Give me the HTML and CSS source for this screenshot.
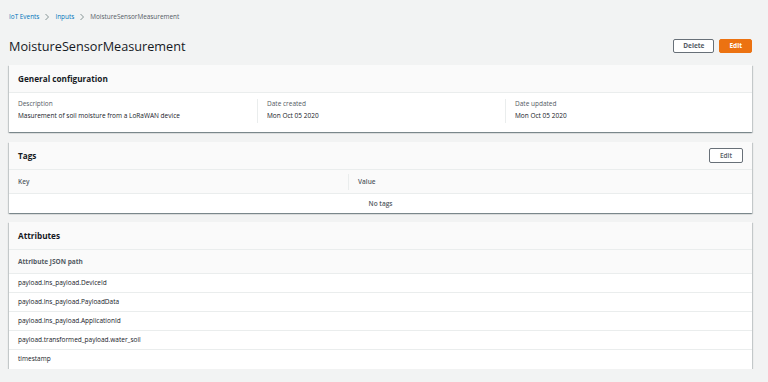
FILE: index.html
```html
<!DOCTYPE html>
<html>
<head>
<meta charset="utf-8">
<link rel="stylesheet" href="styles.css">
</head>
<body>
<div class="page">
  <nav class="crumbs">
    <a class="crumb-link">IoT Events</a>
    <svg class="chev" width="6" height="8" viewBox="0 0 6 8"><path d="M1.5 1 L4.5 4 L1.5 7" fill="none" stroke="#879596" stroke-width="1"/></svg>
    <a class="crumb-link">Inputs</a>
    <svg class="chev" width="6" height="8" viewBox="0 0 6 8"><path d="M1.5 1 L4.5 4 L1.5 7" fill="none" stroke="#879596" stroke-width="1"/></svg>
    <span class="crumb-current">MoistureSensorMeasurement</span>
  </nav>

  <header class="page-head">
    <h1 class="title">MoistureSensorMeasurement</h1>
    <div class="actions">
      <button class="btn">Delete</button>
      <button class="btn btn-primary">Edit</button>
    </div>
  </header>

  <section class="card card-first">
    <div class="card-head"><h2 class="card-title">General configuration</h2></div>
    <div class="kv">
      <div class="kv-col">
        <div class="kv-label">Description</div>
        <div class="kv-value">Masurement of soil moisture from a LoRaWAN device</div>
      </div>
      <div class="kv-col">
        <div class="kv-label">Date created</div>
        <div class="kv-value">Mon Oct 05 2020</div>
      </div>
      <div class="kv-col">
        <div class="kv-label">Date updated</div>
        <div class="kv-value">Mon Oct 05 2020</div>
      </div>
    </div>
  </section>

  <section class="card card-tags">
    <div class="card-head">
      <h2 class="card-title">Tags</h2>
      <button class="btn btn-small">Edit</button>
    </div>
    <div class="thead">
      <div class="th th-key">Key</div>
      <div class="th th-div">Value</div>
    </div>
    <div class="empty">No tags</div>
  </section>

  <section class="card card-attrs">
    <div class="card-head"><h2 class="card-title">Attributes</h2></div>
    <div class="thead"><div class="th th-bold">Attribute JSON path</div></div>
    <div class="row">payload.lns_payload.DeviceId</div>
    <div class="row">payload.lns_payload.PayloadData</div>
    <div class="row">payload.lns_payload.ApplicationId</div>
    <div class="row">payload.transformed_payload.water_soil</div>
    <div class="row row-last">timestamp</div>
  </section>
</div>
</body>
</html>
```

FILE: styles.css
```css
* { box-sizing: border-box; }
html, body { margin: 0; padding: 0; }
body {
  background: #f2f3f3;
  font-family: "Open Sans", "Liberation Sans", sans-serif;
  color: #16191f;
  font-size: 7px;
}
.page {
  padding: 11px 16px 0 9px;
  display: flex;
  flex-direction: column;
}
.crumbs {
  display: flex;
  align-items: center;
  gap: 5px;
  height: 11px;
  font-size: 6.4px;
}
.crumb-link { color: #0073bb; }
.crumb-current { color: #545b64; }
.chev { display: block; }

.page-head {
  display: flex;
  align-items: center;
  justify-content: space-between;
  margin-top: 16px;
  height: 16px;
}
.title {
  margin: 0;
  font-size: 12.7px;
  font-weight: 400;
  color: #16191f;
}
.actions { display: flex; gap: 5px; }
.btn {
  font-family: inherit;
  font-size: 6.5px;
  font-weight: 700;
  color: #545b64;
  background: #fff;
  border: 1px solid #687078;
  border-radius: 2px;
  height: 14px;
  padding: 0 9px;
  line-height: 12px;
}
.btn-primary {
  background: #ec7211;
  border-color: #ec7211;
  color: #fff;
  padding: 0 9px;
}
.btn-small { padding: 0 10px; height: 15px; font-weight: 600; }

.card {
  background: #fff;
  box-shadow: 0 1px 1px 0 rgba(0, 28, 36, 0.3), 1px 1px 1px 0 rgba(0, 28, 36, 0.15), -1px 1px 1px 0 rgba(0, 28, 36, 0.15);
}
.card-first { margin-top: 11px; }
.card-tags { margin-top: 10px; }
.card-attrs { margin-top: 9px; }
.card-head {
  background: #fafafa;
  border-bottom: 1px solid #eaeded;
  height: 28px;
  display: flex;
  align-items: center;
  justify-content: space-between;
  padding: 0 9px 0 9px;
}
.card-title {
  margin: 0;
  font-size: 8.2px;
  font-weight: 700;
}
.kv {
  display: grid;
  grid-template-columns: 239px 248px 1fr;
  padding: 6px 9px 9px 9px;
}
.kv-col {
  padding: 0 9px;
  border-left: 1px solid #eaeded;
  min-height: 24px;
}
.kv-col:first-child { border-left: none; padding-left: 0; }
.kv-label { color: #545b64; font-size: 6.5px; line-height: 10px; }
.kv-value { font-size: 6.5px; line-height: 12px; margin-top: 1px; }

.thead {
  background: #fafafa;
  display: flex;
  height: 24px;
  align-items: center;
  border-bottom: 1px solid #eaeded;
}
.th {
  flex: 1;
  padding: 0 9px;
  color: #545b64;
  font-size: 6.5px;
  font-weight: 600;
  height: 16px;
  line-height: 16px;
}
.th-key { flex: 0 0 339px; }
.th-div { border-left: 1px solid #eaeded; }
.th-bold { font-weight: 700; }
.empty {
  text-align: center;
  height: 19px;
  line-height: 19px;
  color: #545b64;
  font-size: 6.5px;
  font-weight: 600;
}
.row {
  height: 19px;
  line-height: 18px;
  padding: 0 9px;
  border-bottom: 1px solid #eaeded;
  font-size: 6.5px;
}
.row-last { border-bottom: none; }
```
